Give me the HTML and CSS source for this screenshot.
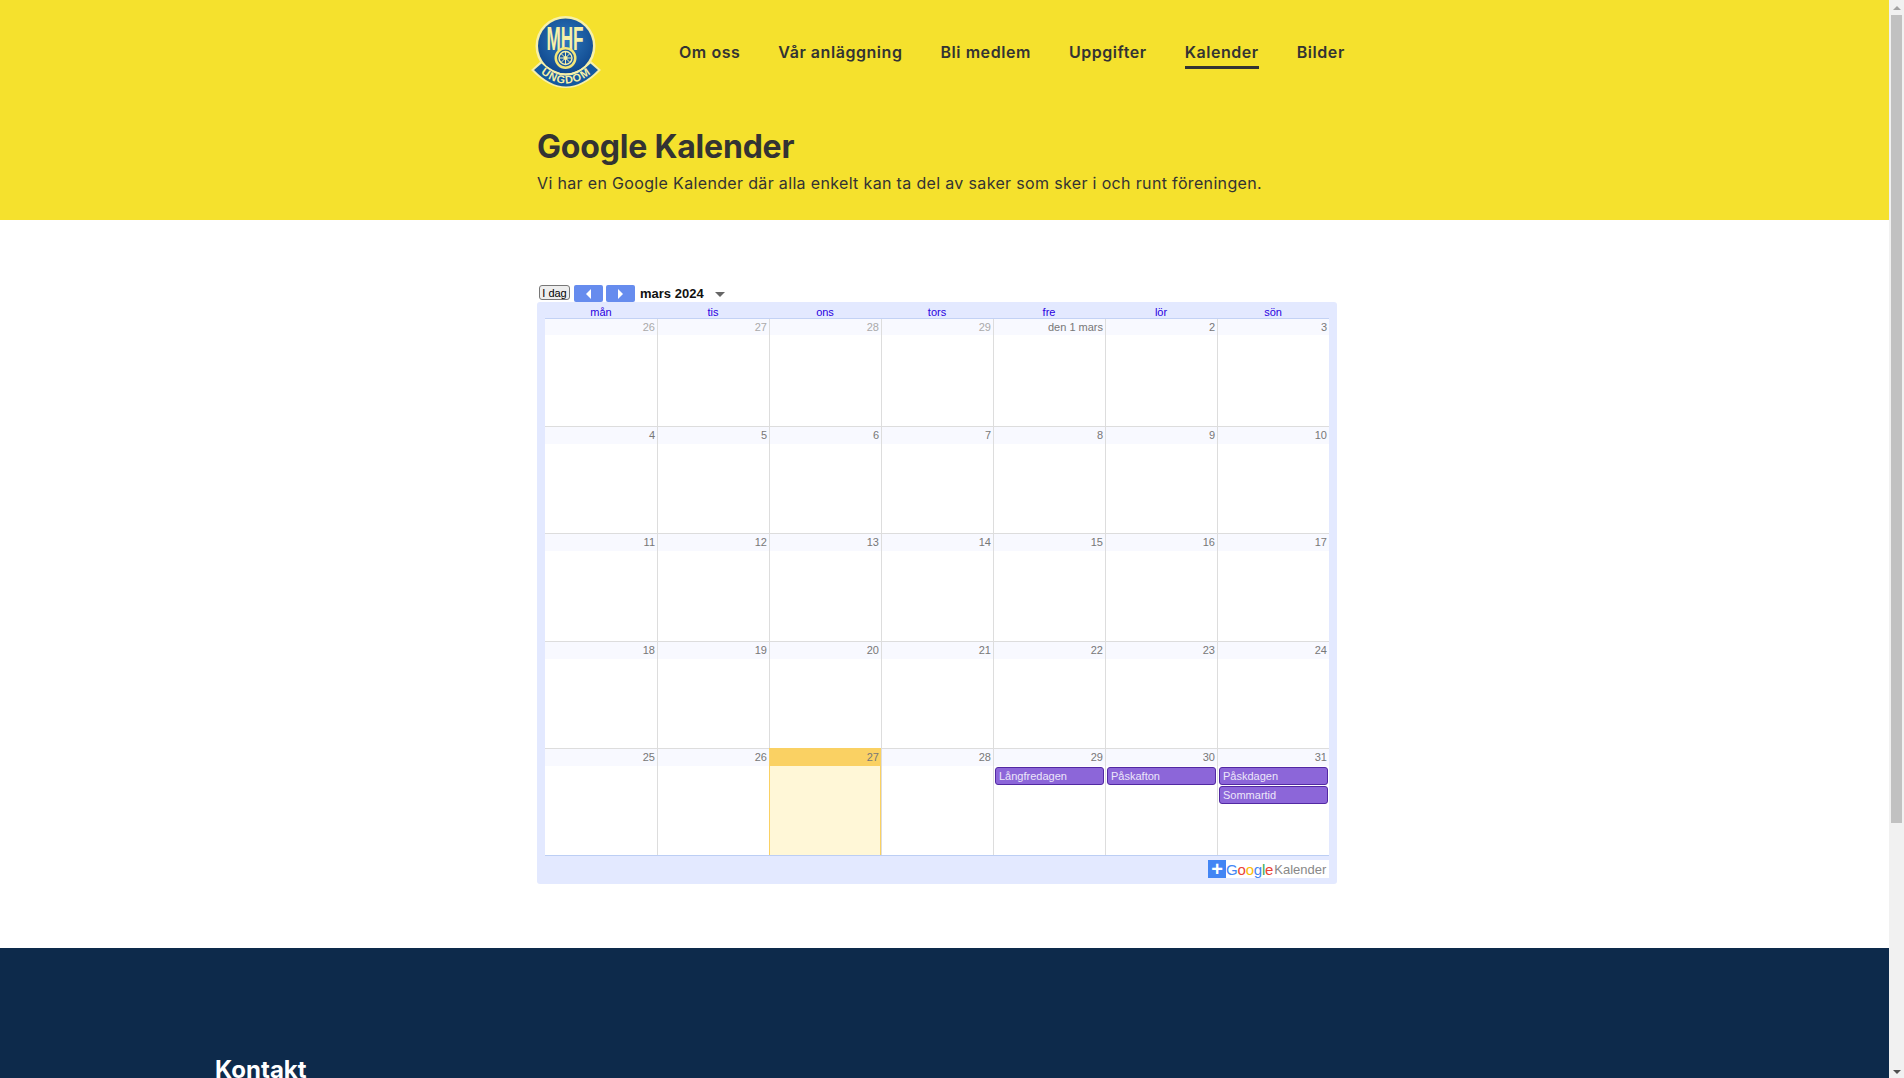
FILE: index.html
```html
<!DOCTYPE html>
<html lang="sv">
<head>
<meta charset="UTF-8" />
<meta name="viewport" content="width=device-width, initial-scale=1" />
<title>Google Kalender</title>
<link rel="stylesheet" href="styles.css">
</head>
<body>

<div class="sida">
<header class="topp">
  <div class="behallare">
    <div class="meny-rad">
      <a class="logo" href="#">
        <svg width="70" height="73" viewBox="0 0 70 73">
          <defs>
            <radialGradient id="blaGradient" cx="50%" cy="40%" r="60%">
              <stop offset="0" stop-color="#2f79bd"/>
              <stop offset="1" stop-color="#10498f"/>
            </radialGradient>
            <path id="bandBage" d="M5 53 Q35 82 65 53"/>
          </defs>
          <circle cx="34.500" cy="30" r="30" fill="#f7f0a8"/>
          <circle cx="34.500" cy="30" r="27.500" fill="url(#blaGradient)"/>
          <text class="logo-mhf" transform="translate(34 34) scale(.52 1)" text-anchor="middle">MHF</text>
          <circle cx="34.500" cy="42" r="11" fill="#f4e67a"/>
          <circle cx="34.500" cy="42" r="8.500" fill="#1a5aa0"/>
          <circle cx="34.500" cy="42" r="6.500" fill="none" stroke="#f7f0a8" stroke-width="1.400"/>
          <path d="M34.500 36v12M28.500 42h12M30.300 37.800l8.400 8.400M38.700 37.800l-8.400 8.400" stroke="#f7f0a8" stroke-width="1"/>
          <circle cx="34.500" cy="42" r="2" fill="#f7f0a8"/>
          <path d="M10 45 Q35 70 60 45 L70 54 Q35 90 0 54 Z" fill="#f7f0a8"/>
          <path d="M10.500 47.500 Q35 72 59.500 47.500 L67 54 Q35 87 3 54 Z" fill="#14589f"/>
          <text class="logo-ungdom"><textPath href="#bandBage" startOffset="50%" text-anchor="middle">UNGDOM</textPath></text>
        </svg>
      </a>
      <nav class="meny">
        <a href="#">Om oss</a>
        <a href="#">Vår anläggning</a>
        <a href="#">Bli medlem</a>
        <a href="#">Uppgifter</a>
        <a href="#" class="aktiv">Kalender</a>
        <a href="#">Bilder</a>
      </nav>
    </div>
    <h1>Google Kalender</h1>
    <p class="ingress">Vi har en Google Kalender där alla enkelt kan ta del av saker som sker i och runt föreningen.</p>
  </div>
</header>

<main class="innehall">
  <div class="behallare">
  <div class="kalender">
    <div class="verktyg">
      <button class="idag">I dag</button>
      <button class="pil"><span class="pil-v"></span></button>
      <button class="pil"><span class="pil-h"></span></button>
      <span class="manad">mars 2024</span>
      <span class="nedpil"></span>
    </div>
    <div class="ram">
      <div class="veckodagar">
        <span>mån</span><span>tis</span><span>ons</span><span>tors</span><span>fre</span><span>lör</span><span>sön</span>
      </div>
      <div class="rutnat">
        <div class="dag annan"><div class="datum">26</div></div>
        <div class="dag annan"><div class="datum">27</div></div>
        <div class="dag annan"><div class="datum">28</div></div>
        <div class="dag annan"><div class="datum">29</div></div>
        <div class="dag"><div class="datum">den 1 mars</div></div>
        <div class="dag"><div class="datum">2</div></div>
        <div class="dag"><div class="datum">3</div></div>

        <div class="dag"><div class="datum">4</div></div>
        <div class="dag"><div class="datum">5</div></div>
        <div class="dag"><div class="datum">6</div></div>
        <div class="dag"><div class="datum">7</div></div>
        <div class="dag"><div class="datum">8</div></div>
        <div class="dag"><div class="datum">9</div></div>
        <div class="dag"><div class="datum">10</div></div>

        <div class="dag"><div class="datum">11</div></div>
        <div class="dag"><div class="datum">12</div></div>
        <div class="dag"><div class="datum">13</div></div>
        <div class="dag"><div class="datum">14</div></div>
        <div class="dag"><div class="datum">15</div></div>
        <div class="dag"><div class="datum">16</div></div>
        <div class="dag"><div class="datum">17</div></div>

        <div class="dag"><div class="datum">18</div></div>
        <div class="dag"><div class="datum">19</div></div>
        <div class="dag"><div class="datum">20</div></div>
        <div class="dag"><div class="datum">21</div></div>
        <div class="dag"><div class="datum">22</div></div>
        <div class="dag"><div class="datum">23</div></div>
        <div class="dag"><div class="datum">24</div></div>

        <div class="dag"><div class="datum">25</div></div>
        <div class="dag"><div class="datum">26</div></div>
        <div class="dag idag-ruta"><div class="datum">27</div></div>
        <div class="dag"><div class="datum">28</div></div>
        <div class="dag"><div class="datum">29</div><div class="handelse">Långfredagen</div></div>
        <div class="dag"><div class="datum">30</div><div class="handelse">Påskafton</div></div>
        <div class="dag"><div class="datum">31</div><div class="handelse">Påskdagen</div><div class="handelse">Sommartid</div></div>
      </div>
      <div class="sidfot-kal">
        <div class="gcal">
          <span class="plus">+</span>
          <span class="g-logo"><i class="b">G</i><i class="r">o</i><i class="y">o</i><i class="b">g</i><i class="g">l</i><i class="r">e</i></span>
          <span class="g-text">Kalender</span>
        </div>
      </div>
    </div>
  </div>
  </div>
</main>

<footer class="botten">
  <h2>Kontakt</h2>
</footer>
</div>

<aside class="rullist">
  <span class="pil-upp"></span>
  <span class="tumme"></span>
  <span class="pil-ned"></span>
</aside>

</body>
</html>
```

FILE: styles.css
```css
* {
  box-sizing: border-box;
}
body {
  display: flex;
  height: 100vh;
  margin: 0;
  overflow: hidden;
  font-family: Inter, "Open Sans", sans-serif;
  color: #333;
  background: white;
}
a {
  color: inherit;
  text-decoration: none;
}
.sida {
  flex: 1;
  min-width: 0;
  height: 100%;
  overflow: hidden;
}

/* Rullist */
.rullist {
  display: flex;
  flex-direction: column;
  align-items: center;
  width: 15px;
  background: #f1f1f1;
}
.pil-upp, .pil-ned {
  width: 0;
  height: 0;
  border-left: 4px solid transparent;
  border-right: 4px solid transparent;
}
.pil-upp {
  margin-top: 6px;
  border-bottom: 4px solid #a3a3a3;
}
.tumme {
  width: 11px;
  height: 808px;
  margin-top: 5px;
  background: #c1c1c1;
}
.pil-ned {
  margin-top: auto;
  margin-bottom: 4px;
  border-top: 4px solid #505050;
}

/* Gul topp */
.topp {
  background-color: #f5e12d;
  height: 220px;
}
.behallare {
  width: 815px;
  margin: 0 auto;
}
.meny-rad {
  display: flex;
  align-items: flex-start;
  padding-top: 16px;
  height: 125px;
}
.logo {
  display: block;
  width: 70px;
  height: 73px;
  margin-left: -6px;
}
.logo svg {
  display: block;
}
.logo-mhf {
  font-family: "Liberation Sans", sans-serif;
  font-weight: bold;
  font-size: 33px;
  fill: #f7f0a8;
}
.logo-ungdom {
  font-family: "Liberation Sans", sans-serif;
  font-weight: bold;
  font-size: 11px;
  fill: #f7f0a8;
  letter-spacing: 1px;
}
.meny {
  display: flex;
  gap: 38px;
  margin-left: 78px;
  padding-top: 25px;
  font-size: 16px;
  font-weight: 600;
  letter-spacing: 0.55px;
}
.meny a {
  display: block;
  height: 28px;
  line-height: 22px;
}
.meny a.aktiv {
  border-bottom: 3px solid #333;
}
h1 {
  margin: 0;
  font-size: 32px;
  line-height: 44px;
  font-weight: 700;
  letter-spacing: -0.2px;
}
.ingress {
  margin: 2px 0 0;
  font-size: 16px;
  line-height: 24px;
  letter-spacing: 0.34px;
}

/* Kalender */
.innehall {
  height: 728px;
  padding-top: 65px;
}
.kalender {
  width: 800px;
  font-family: "Liberation Sans", Arial, sans-serif;
  font-size: 11px;
}
.verktyg {
  display: flex;
  align-items: flex-start;
  height: 17px;
  padding-left: 2px;
}
.idag {
  width: 31px;
  height: 15px;
  padding: 0;
  margin-right: 4px;
  font: 11px "Liberation Sans", Arial, sans-serif;
  color: #000;
  background: #eee;
  border: 1px solid #777;
  border-radius: 3px;
}
.pil {
  display: flex;
  align-items: center;
  justify-content: center;
  width: 29px;
  height: 17px;
  padding: 0;
  margin-right: 3px;
  background: #668cee;
  border: 0;
  border-radius: 2px;
}
.pil-v, .pil-h {
  width: 0;
  height: 0;
  border-top: 5px solid transparent;
  border-bottom: 5px solid transparent;
}
.pil-v {
  border-right: 5px solid white;
}
.pil-h {
  border-left: 5px solid white;
}
.manad {
  margin-left: 2px;
  font-size: 13px;
  font-weight: bold;
  line-height: 17px;
  color: #111;
}
.nedpil {
  width: 0;
  height: 0;
  margin: 7px 0 0 11px;
  border-left: 5px solid transparent;
  border-right: 5px solid transparent;
  border-top: 5px solid #666;
}
.ram {
  background: #e3e9ff;
  border-radius: 3px;
  padding: 0 8px;
  height: 582px;
}
.veckodagar {
  display: grid;
  grid-template-columns: repeat(7, 112px);
  height: 17px;
  border-bottom: 1px solid #c3d2f5;
  text-align: center;
  line-height: 20px;
  color: #2a00e0;
}
.rutnat {
  display: grid;
  grid-template-columns: repeat(7, 112px);
  grid-template-rows: 107px 107px 108px 107px 107px;
  background: white;
  border-bottom: 1px solid #bccef4;
  height: 537px;
}
.dag {
  border-top: 1px solid #ddd;
  border-left: 1px solid #ddd;
  overflow: hidden;
}
.dag:nth-child(7n+1) {
  border-left: 0;
}
.rutnat .dag:nth-child(-n+7) {
  border-top: 0;
}
.datum {
  height: 17px;
  padding-right: 2px;
  text-align: right;
  line-height: 17px;
  color: #777;
  background: #f8f9ff;
}
.dag:nth-child(-n+7) .datum {
  height: 16px;
  line-height: 16px;
}
.annan .datum {
  color: #aaa;
}
.idag-ruta {
  background: #fff7d7;
  border-left: 1px solid #fad163;
  border-right: 1px solid #fad163;
  border-top-color: #fad163;
}
.idag-ruta .datum {
  padding-right: 1px;
  background: #fad163;
}
.handelse {
  height: 18px;
  margin: 1px;
  padding-left: 3px;
  line-height: 16px;
  color: #ece6f9;
  background: #8c66d9;
  border: 1px solid #5229a3;
  border-radius: 3px;
}
.sidfot-kal {
  display: flex;
  justify-content: flex-end;
  padding-top: 4px;
}
.gcal {
  display: flex;
  align-items: center;
  width: 121px;
  height: 18px;
  background: white;
}
.plus {
  width: 18px;
  height: 18px;
  font-size: 20px;
  font-weight: bold;
  line-height: 18px;
  text-align: center;
  color: white;
  background: #4285f4;
}
.g-logo {
  font-size: 15px;
  letter-spacing: -0.2px;
}
.g-logo i {
  font-style: normal;
}
.g-logo .b { color: #4285f4; }
.g-logo .r { color: #ea4335; }
.g-logo .y { color: #fbbc05; }
.g-logo .g { color: #34a853; }
.g-text {
  margin-left: 1px;
  font-size: 13px;
  color: #888;
}

/* Mörkblå botten */
.botten {
  background-color: #0d2a4b;
  height: 450px;
  padding: 107px 0 0 215px;
  color: white;
}
.botten h2 {
  margin: 0;
  font-size: 24px;
  line-height: 30px;
  font-weight: 700;
}
```
